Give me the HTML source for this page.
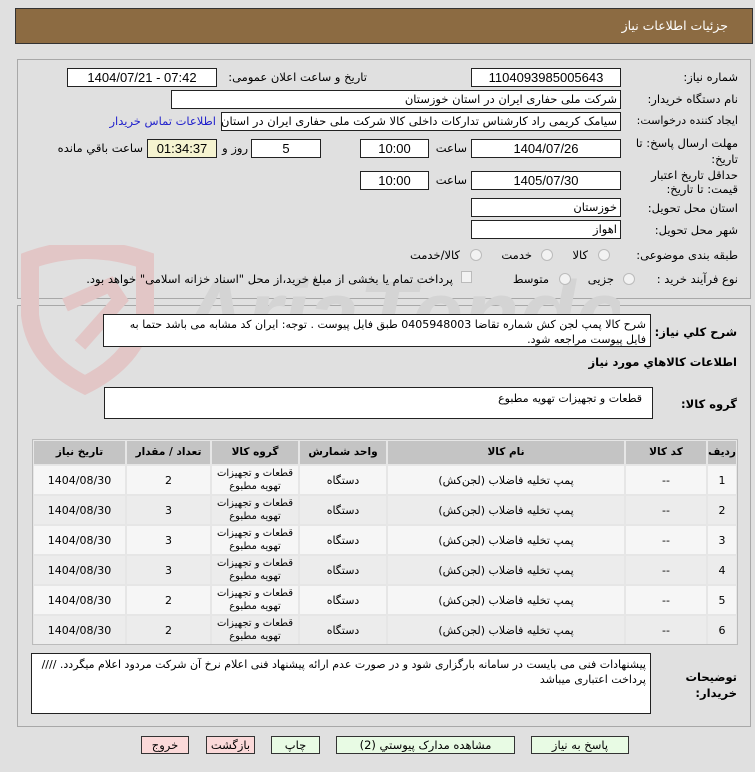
<!DOCTYPE html>
<html><head><meta charset="utf-8"><style>
*{box-sizing:border-box;margin:0;padding:0}
body{width:755px;height:772px;background:#e0e0e0;position:relative;overflow:hidden;font-family:"DejaVu Sans","Liberation Sans",sans-serif;font-size:11.5px;color:#000}
.a{position:absolute}
.hdr{left:15px;top:8px;width:738px;height:36px;background:#8c6b42;border:1px solid #333}
.hdr span{position:absolute;right:24px;top:9px;color:#fff;font-size:12.5px}
.pn{border:1px solid #a8a8a8}
.box{position:absolute;background:#fff;border:1px solid #222;height:19px;font-size:13px;line-height:17px;text-align:center;font-family:"Liberation Sans","DejaVu Sans",sans-serif}
.rt{direction:rtl;text-align:right;padding-right:3px;font-family:"DejaVu Sans",sans-serif;font-size:11.5px}
.lb{position:absolute;direction:rtl;white-space:nowrap;font-size:11.5px}
.b{font-weight:bold}
.rad{position:absolute;width:12px;height:12px;border-radius:50%;border:1px solid #bbb;background:#f2f2f2}
.tb{position:absolute;left:32px;top:439px;width:706px;height:206px;background:#e6e6e6;border:1px solid #bbb}
.c{position:absolute;text-align:center;direction:rtl;font-size:11px;overflow:hidden;display:flex;align-items:center;justify-content:center;line-height:13px}
.h{background:#c4c4c4;font-weight:bold;font-size:10.5px}
.btn{position:absolute;top:736px;height:18px;border:1px solid #333;font-size:11.5px;text-align:center;line-height:16px;direction:rtl}
.g{background:#e8fbe4}.p{background:#fbd9d9}
.ta{position:absolute;background:#fff;border:1px solid #222;direction:rtl;text-align:right;padding:3px 4px;font-size:11px;line-height:15px}
</style></head><body>
<div class="a hdr"><span>جزئیات اطلاعات نیاز</span></div>
<div class="a pn" style="left:17px;top:59px;width:734px;height:240px"></div>
<div class="a pn" style="left:17px;top:305px;width:734px;height:422px"></div>
<svg class="a" style="left:20px;top:245px" width="600" height="150">
<path d="M10 15 Q65 -5 125 15 L125 70 Q115 115 65 140 Q15 115 10 70 Z" fill="none" stroke="#e2c6c6" stroke-width="18"/>
<path d="M45 60 L90 40 L100 55 L60 100" fill="none" stroke="#e2c6c6" stroke-width="14"/>
<text x="160" y="100" font-family="Liberation Sans" font-weight="bold" font-style="italic" font-size="92" fill="#d4d4d4">AriaTender.net</text>
</svg>
<div class="lb" style="right:17px;top:70px">شماره نیاز:</div>
<div class="box" style="left:471px;top:68px;width:150px">1104093985005643</div>
<div class="lb" style="right:388px;top:70px">تاریخ و ساعت اعلان عمومی:</div>
<div class="box" style="left:67px;top:68px;width:150px">1404/07/21 - 07:42</div>
<div class="lb" style="right:17px;top:92px">نام دستگاه خریدار:</div>
<div class="box rt" style="left:171px;top:90px;width:450px">شرکت ملی حفاری ایران در استان خوزستان</div>
<div class="lb" style="right:17px;top:114px;font-size:11px">ایجاد کننده درخواست:</div>
<div class="box rt" style="left:221px;top:112px;width:400px;overflow:hidden;white-space:nowrap">سیامک کریمی راد کارشناس تدارکات داخلی کالا شرکت ملی حفاری ایران در استان</div>
<div class="lb" style="right:539px;top:114px;color:#2222cc">اطلاعات تماس خریدار</div>
<div class="lb" style="right:17px;top:136px">مهلت ارسال پاسخ: تا</div>
<div class="lb" style="right:17px;top:152px">تاریخ:</div>
<div class="box" style="left:471px;top:139px;width:150px">1404/07/26</div>
<div class="lb" style="right:288px;top:141px">ساعت</div>
<div class="box" style="left:360px;top:139px;width:69px">10:00</div>
<div class="box" style="left:251px;top:139px;width:70px">5</div>
<div class="lb" style="right:507px;top:141px">روز و</div>
<div class="box" style="left:147px;top:139px;width:70px;background:#f5f3d0">01:34:37</div>
<div class="lb" style="right:612px;top:141px">ساعت باقي مانده</div>
<div class="lb" style="right:17px;top:168px">حداقل تاریخ اعتبار</div>
<div class="lb" style="right:17px;top:182px">قیمت: تا تاریخ:</div>
<div class="box" style="left:471px;top:171px;width:150px">1405/07/30</div>
<div class="lb" style="right:288px;top:173px">ساعت</div>
<div class="box" style="left:360px;top:171px;width:69px">10:00</div>
<div class="lb" style="right:17px;top:201px">استان محل تحویل:</div>
<div class="box rt" style="left:471px;top:198px;width:150px">خوزستان</div>
<div class="lb" style="right:17px;top:223px">شهر محل تحویل:</div>
<div class="box rt" style="left:471px;top:220px;width:150px">اهواز</div>
<div class="lb" style="right:17px;top:248px">طبقه بندی موضوعی:</div>
<div class="rad" style="left:598px;top:249px"></div><div class="lb" style="right:167px;top:248px">کالا</div>
<div class="rad" style="left:541px;top:249px"></div><div class="lb" style="right:223px;top:248px">خدمت</div>
<div class="rad" style="left:470px;top:249px"></div><div class="lb" style="right:295px;top:248px">کالا/خدمت</div>
<div class="lb" style="right:17px;top:272px">نوع فرآیند خرید :</div>
<div class="rad" style="left:623px;top:273px"></div><div class="lb" style="right:141px;top:272px">جزیی</div>
<div class="rad" style="left:559px;top:273px"></div><div class="lb" style="right:206px;top:272px">متوسط</div>
<div class="a" style="left:461px;top:271px;width:11px;height:12px;border:1px solid #bbb;background:#f2f2f2"></div>
<div class="lb" style="right:302px;top:272px">پرداخت تمام یا بخشی از مبلغ خرید،از محل "اسناد خزانه اسلامی" خواهد بود.</div>
<div class="lb b" style="right:18px;top:325px">شرح كلي نياز:</div>
<div class="ta" style="left:103px;top:314px;width:548px;height:33px;padding-top:2px">شرح کالا پمپ لجن کش شماره تقاضا  0405948003 طبق فایل پیوست . توجه: ایران کد مشابه می باشد حتما به فایل پیوست مراجعه شود.</div>
<div class="lb b" style="right:18px;top:355px">اطلاعات كالاهاي مورد نياز</div>
<div class="lb b" style="right:18px;top:397px">گروه کالا:</div>
<div class="ta" style="left:104px;top:387px;width:549px;height:32px;padding-right:10px;padding-top:3px">قطعات و تجهیزات تهویه مطبوع</div>
<div class="tb">
<div class="c h" style="left:675px;top:1px;width:28px;height:23px">ردیف</div>
<div class="c h" style="left:593px;top:1px;width:80px;height:23px">کد کالا</div>
<div class="c h" style="left:355px;top:1px;width:236px;height:23px">نام کالا</div>
<div class="c h" style="left:267px;top:1px;width:86px;height:23px">واحد شمارش</div>
<div class="c h" style="left:179px;top:1px;width:86px;height:23px">گروه کالا</div>
<div class="c h" style="left:94px;top:1px;width:83px;height:23px">تعداد / مقدار</div>
<div class="c h" style="left:1px;top:1px;width:91px;height:23px">تاریخ نیاز</div>
</div>
<div id="rows"></div>
<div class="lb b" style="right:18px;top:670px">توضیحات</div>
<div class="lb b" style="right:18px;top:686px">خریدار:</div>
<div class="ta" style="left:31px;top:653px;width:620px;height:61px">پیشنهادات فنی می بایست در سامانه بارگزاری شود و در صورت عدم ارائه پیشنهاد فنی اعلام نرخ آن شرکت مردود اعلام میگردد.  //// پرداخت اعتباری میباشد</div>
<div class="btn g" style="left:531px;width:98px">پاسخ به نیاز</div>
<div class="btn g" style="left:336px;width:179px">مشاهده مدارک پیوستي (2)</div>
<div class="btn g" style="left:271px;width:49px">چاپ</div>
<div class="btn p" style="left:206px;width:49px">بازگشت</div>
<div class="btn p" style="left:141px;width:48px">خروج</div>
<style>.r0{background:#f6f6f6}.r1{background:#ececec}</style>
<div class="a" style="left:32px;top:439px">
<div class="c r0" style="left:676px;top:27px;width:28px;height:28px">1</div><div class="c r0" style="left:594px;top:27px;width:80px;height:28px">--</div><div class="c r0" style="left:356px;top:27px;width:236px;height:28px">پمپ تخلیه فاضلاب (لجن‌کش)</div><div class="c r0" style="left:268px;top:27px;width:86px;height:28px">دستگاه</div><div class="c r0" style="left:180px;top:27px;width:86px;height:28px;font-size:10px">قطعات و تجهیزات<br>تهویه مطبوع</div><div class="c r0" style="left:95px;top:27px;width:83px;height:28px">2</div><div class="c r0" style="left:2px;top:27px;width:91px;height:28px">1404/08/30</div>
<div class="c r1" style="left:676px;top:57px;width:28px;height:28px">2</div><div class="c r1" style="left:594px;top:57px;width:80px;height:28px">--</div><div class="c r1" style="left:356px;top:57px;width:236px;height:28px">پمپ تخلیه فاضلاب (لجن‌کش)</div><div class="c r1" style="left:268px;top:57px;width:86px;height:28px">دستگاه</div><div class="c r1" style="left:180px;top:57px;width:86px;height:28px;font-size:10px">قطعات و تجهیزات<br>تهویه مطبوع</div><div class="c r1" style="left:95px;top:57px;width:83px;height:28px">3</div><div class="c r1" style="left:2px;top:57px;width:91px;height:28px">1404/08/30</div>
<div class="c r0" style="left:676px;top:87px;width:28px;height:28px">3</div><div class="c r0" style="left:594px;top:87px;width:80px;height:28px">--</div><div class="c r0" style="left:356px;top:87px;width:236px;height:28px">پمپ تخلیه فاضلاب (لجن‌کش)</div><div class="c r0" style="left:268px;top:87px;width:86px;height:28px">دستگاه</div><div class="c r0" style="left:180px;top:87px;width:86px;height:28px;font-size:10px">قطعات و تجهیزات<br>تهویه مطبوع</div><div class="c r0" style="left:95px;top:87px;width:83px;height:28px">3</div><div class="c r0" style="left:2px;top:87px;width:91px;height:28px">1404/08/30</div>
<div class="c r1" style="left:676px;top:117px;width:28px;height:28px">4</div><div class="c r1" style="left:594px;top:117px;width:80px;height:28px">--</div><div class="c r1" style="left:356px;top:117px;width:236px;height:28px">پمپ تخلیه فاضلاب (لجن‌کش)</div><div class="c r1" style="left:268px;top:117px;width:86px;height:28px">دستگاه</div><div class="c r1" style="left:180px;top:117px;width:86px;height:28px;font-size:10px">قطعات و تجهیزات<br>تهویه مطبوع</div><div class="c r1" style="left:95px;top:117px;width:83px;height:28px">3</div><div class="c r1" style="left:2px;top:117px;width:91px;height:28px">1404/08/30</div>
<div class="c r0" style="left:676px;top:147px;width:28px;height:28px">5</div><div class="c r0" style="left:594px;top:147px;width:80px;height:28px">--</div><div class="c r0" style="left:356px;top:147px;width:236px;height:28px">پمپ تخلیه فاضلاب (لجن‌کش)</div><div class="c r0" style="left:268px;top:147px;width:86px;height:28px">دستگاه</div><div class="c r0" style="left:180px;top:147px;width:86px;height:28px;font-size:10px">قطعات و تجهیزات<br>تهویه مطبوع</div><div class="c r0" style="left:95px;top:147px;width:83px;height:28px">2</div><div class="c r0" style="left:2px;top:147px;width:91px;height:28px">1404/08/30</div>
<div class="c r1" style="left:676px;top:177px;width:28px;height:28px">6</div><div class="c r1" style="left:594px;top:177px;width:80px;height:28px">--</div><div class="c r1" style="left:356px;top:177px;width:236px;height:28px">پمپ تخلیه فاضلاب (لجن‌کش)</div><div class="c r1" style="left:268px;top:177px;width:86px;height:28px">دستگاه</div><div class="c r1" style="left:180px;top:177px;width:86px;height:28px;font-size:10px">قطعات و تجهیزات<br>تهویه مطبوع</div><div class="c r1" style="left:95px;top:177px;width:83px;height:28px">2</div><div class="c r1" style="left:2px;top:177px;width:91px;height:28px">1404/08/30</div>
</div>
</body></html>
